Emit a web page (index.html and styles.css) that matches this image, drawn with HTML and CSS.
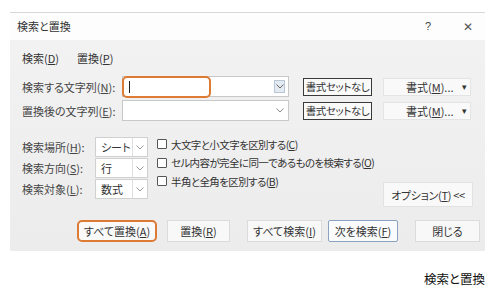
FILE: index.html
```html
<!DOCTYPE html>
<html lang="ja">
<head>
<meta charset="utf-8">
<link rel="stylesheet" href="styles.css">
</head>
<body>
<div class="dialog">
  <div class="titlebar">
    <span class="title">検索と置換</span>
    <span class="help">?</span>
    <span class="close">✕</span>
  </div>
  <div class="content">
    <div class="tabs">
      <span class="tab">検索(<u>D</u>)</span>
      <span class="tab">置換(<u>P</u>)</span>
    </div>
    <div class="frow first">
      <span class="flabel">検索する文字列(<u>N</u>):</span>
      <div class="combo">
        <div class="caret"></div>
        <div class="hl"></div>
        <span class="arrow active"><svg width="8" height="5" viewBox="0 0 8 5"><path d="M0.5 0.5 L4 4 L7.5 0.5" fill="none" stroke="#666" stroke-width="1"/></svg></span>
      </div>
      <span class="fmt-none">書式セットなし</span>
      <span class="fmt">書式(<u>M</u>)...<span class="tri">▾</span></span>
    </div>
    <div class="frow">
      <span class="flabel">置換後の文字列(<u>E</u>):</span>
      <div class="combo">
        <span class="arrow"><svg width="8" height="5" viewBox="0 0 8 5"><path d="M0.5 0.5 L4 4 L7.5 0.5" fill="none" stroke="#888" stroke-width="1"/></svg></span>
      </div>
      <span class="fmt-none">書式セットなし</span>
      <span class="fmt">書式(<u>M</u>)...<span class="tri">▾</span></span>
    </div>
    <div class="opts">
      <div class="selcol">
        <div class="srow"><span class="slabel">検索場所(<u>H</u>):</span><span class="sel">シート<span class="sarrow"><svg width="8" height="5" viewBox="0 0 8 5"><path d="M0.5 0.5 L4 4 L7.5 0.5" fill="none" stroke="#999" stroke-width="1"/></svg></span></span></div>
        <div class="srow"><span class="slabel">検索方向(<u>S</u>):</span><span class="sel">行<span class="sarrow"><svg width="8" height="5" viewBox="0 0 8 5"><path d="M0.5 0.5 L4 4 L7.5 0.5" fill="none" stroke="#999" stroke-width="1"/></svg></span></span></div>
        <div class="srow"><span class="slabel">検索対象(<u>L</u>):</span><span class="sel">数式<span class="sarrow"><svg width="8" height="5" viewBox="0 0 8 5"><path d="M0.5 0.5 L4 4 L7.5 0.5" fill="none" stroke="#999" stroke-width="1"/></svg></span></span></div>
      </div>
      <div class="chkcol">
        <div class="chk"><span class="box"></span>大文字と小文字を区別する(<u>C</u>)</div>
        <div class="chk"><span class="box"></span>セル内容が完全に同一であるものを検索する(<u>O</u>)</div>
        <div class="chk"><span class="box"></span>半角と全角を区別する(<u>B</u>)</div>
      </div>
      <div class="optcol">
        <span class="optbtn">オプション(<u>T</u>) &lt;&lt;</span>
      </div>
    </div>
    <div class="buttons">
      <span class="btn b-all hl-btn">すべて置換(<u>A</u>)</span>
      <span class="btn b-rep">置換(<u>R</u>)</span>
      <span class="btn b-fall">すべて検索(<u>I</u>)</span>
      <span class="btn b-next def">次を検索(<u>F</u>)</span>
      <span class="btn b-close">閉じる</span>
    </div>
  </div>
</div>
<div class="caption">検索と置換</div>
</body>
</html>
```
FILE: styles.css
```css
* { box-sizing: border-box; }
html, body { margin: 0; padding: 0; }
body {
  width: 500px;
  height: 289px;
  background: #fff;
  font-family: "Noto Sans CJK JP", "Noto Sans", sans-serif;
  font-size: 11px;
  font-feature-settings: "palt";
  color: #333;
  overflow: hidden;
}
u { text-decoration: underline; text-underline-offset: 1px; }
.dialog {
  margin: 12px 0 0 10px;
  width: 475px;
  border-top: 1px solid #d8d8d8;
}
.titlebar {
  height: 27px;
  background: #fdfdfd;
  display: flex;
  align-items: center;
  padding-left: 7px;
  padding-bottom: 2px;
}
.title { flex: 1; color: #333; }
.help { width: 38px; font-size: 11px; color: #444; font-family: "Liberation Sans", sans-serif; }
.close { width: 22px; font-size: 12px; color: #555; }
.content {
  height: 211px;
  background: linear-gradient(#f2f2f2, #ececec);
  padding: 8px 0 0 12px;
}
.tabs { display: flex; height: 20px; align-items: center; gap: 18px; }
.tab { color: #333; }
.frow { display: flex; align-items: center; height: 21px; margin-top: 3px; }
.frow.first { margin-top: 8px; }
.flabel { width: 100px; white-space: nowrap; color: #444; }
.combo {
  position: relative;
  width: 167px;
  height: 21px;
  background: #fff;
  border: 1px solid #c8c8c8;
  flex-shrink: 0;
}
.hl {
  position: absolute;
  left: -1px; top: -1px;
  width: 89px; height: 22px;
  border: 2px solid #dd7a34;
  border-radius: 5px;
}
.caret {
  position: absolute;
  left: 6px; top: 4px;
  width: 1px; height: 12px;
  background: #222;
}
.arrow {
  position: absolute;
  right: 3px; top: 3px;
  width: 11px; height: 13px;
  display: flex; align-items: center; justify-content: center;
}
.arrow.active { background: #e4eaf2; border: 1px solid #b9c6d6; }
.fmt-none {
  margin-left: 14px;
  width: 69px; height: 18px;
  border: 1.5px solid #3a3a3a;
  background: #fafafa;
  display: flex; align-items: center; justify-content: center;
  white-space: nowrap;
  flex-shrink: 0;
  font-size: 10.5px;
  letter-spacing: -0.4px;
  color: #333;
}
.fmt {
  margin-left: 11px;
  width: 88px; height: 18px;
  background: #f9f9f9;
  border: 1px solid #e4e4e4;
  display: flex; align-items: center;
  padding-left: 22px;
  white-space: nowrap;
  flex-shrink: 0;
  position: relative;
}
.tri { position: absolute; right: 3px; top: 1px; font-size: 9px; color: #333; }
.opts { display: flex; margin-top: 16px; height: 73px; }
.selcol { width: 135px; flex-shrink: 0; display: flex; flex-direction: column; gap: 1px; }
.srow { display: flex; align-items: center; height: 20px; }
.slabel { width: 73px; white-space: nowrap; color: #444; }
.sel {
  position: relative;
  width: 53px; height: 20px;
  background: #fff;
  border: 1px solid #d0d0d0;
  display: flex; align-items: center;
  padding-left: 5px;
  color: #333;
}
.sarrow {
  position: absolute; right: 0; top: 0;
  width: 15px; height: 18px;
  border-left: 1px solid #e0e0e0;
  display: flex; align-items: center; justify-content: center;
}
.chkcol { width: 226px; flex-shrink: 0; display: flex; flex-direction: column; margin-top: -2px; }
.chk { display: flex; align-items: center; height: 18.5px; white-space: nowrap; color: #333; font-size: 10.5px; letter-spacing: -0.6px; }
.box {
  flex-shrink: 0;
  width: 10px; height: 10px;
  border: 1px solid #555;
  background: #fff;
  margin-right: 4px;
  border-radius: 1px;
}
.optcol { flex: 1; display: flex; align-items: flex-end; padding-bottom: 3px; }
.optbtn {
  width: 90px; height: 25px;
  background: #f9f9f9;
  border: 1px solid #e2e2e2;
  display: flex; align-items: center; justify-content: center;
  white-space: nowrap;
  letter-spacing: -0.3px;
  color: #333;
}
.buttons { display: flex; margin-top: 10px; padding-left: 55px; }
.btn {
  height: 22px;
  background: #f8f8f8;
  border: 1px solid #dcdcdc;
  display: flex; align-items: center; justify-content: center;
  white-space: nowrap;
  flex-shrink: 0;
  color: #333;
}
.hl-btn { border: 2px solid #dd7a34; border-radius: 5px; background: #fafafa; }
.b-all { width: 80px; }
.b-rep { width: 63px; margin-left: 10px; }
.b-fall { width: 75px; margin-left: 17px; }
.b-next { width: 70px; margin-left: 6px; }
.b-close { width: 65px; margin-left: 17px; }
.def { border: 1px solid #8aa2c0; border-radius: 2px; background: #fafbfc; }
.caption {
  margin-top: 18px;
  width: 485px;
  text-align: right;
  font-size: 12.5px;
  color: #111;
}
```
